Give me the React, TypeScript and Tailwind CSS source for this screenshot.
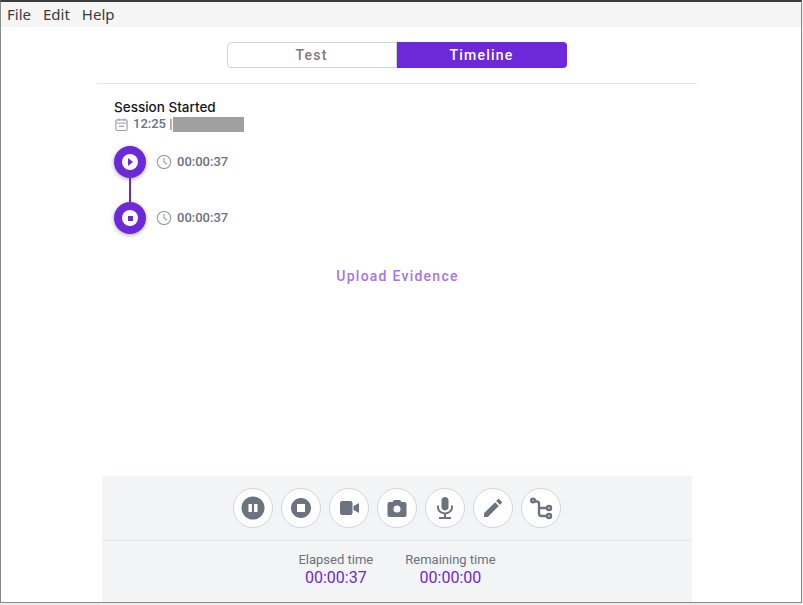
const toolIcons = [
  <svg key="pause" viewBox="0 0 24 24" className="h-6 w-6 fill-current">
    <path
      fillRule="evenodd"
      d="M12 .5a11.500 11.500 0 1 0 0 23 11.500 11.500 0 0 0 0-23zM7.500 8h3.400v8H7.500zm5.600 0h3.400v8h-3.400z"
    />
  </svg>,
  <svg key="stop" viewBox="0 0 24 24" className="h-6 w-6 fill-current">
    <path d="M12 2C6.48 2 2 6.48 2 12s4.48 10 10 10 10-4.48 10-10S17.52 2 12 2zm4 14H8V8h8v8z" />
  </svg>,
  <svg key="video" viewBox="0 0 24 24" className="h-6 w-6 fill-current">
    <path d="M5 5h8.500a2 2 0 0 1 2 2v10a2 2 0 0 1-2 2H5a2 2 0 0 1-2-2V7a2 2 0 0 1 2-2zm11.500 5L22 7v10l-5.500-3z" />
  </svg>,
  <svg key="camera" viewBox="0 0 24 24" className="h-6 w-6 fill-current">
    <path
      fillRule="evenodd"
      d="M9 4L7.500 6H4.500a2 2 0 0 0-2 2v11a2 2 0 0 0 2 2h15a2 2 0 0 0 2-2V8a2 2 0 0 0-2-2h-3L15 4H9zm3 5.500a3.500 3.500 0 1 1 0 7 3.500 3.500 0 0 1 0-7z"
    />
  </svg>,
  <svg key="mic" viewBox="0 0 24 24" className="h-6 w-6 fill-current">
    <path d="M12 14.500c2 0 3.500-1.500 3.500-3.500V4.500C15.500 2.500 14 1 12 1S8.500 2.500 8.500 4.500V11c0 2 1.500 3.500 3.500 3.500zM18 9.500V11c0 3.400-2.600 5.400-6 5.400S6 14.400 6 11V9.500H4V11c0 4 3 6.800 7 7.300V21H6v2h12v-2h-5v-2.700c4-.5 7-3.300 7-7.300V9.500h-2z" />
  </svg>,
  <svg key="pen" viewBox="0 0 24 24" className="h-6 w-6 fill-current">
    <path d="M3 17.250V21h3.750L17.810 9.940l-3.750-3.750L3 17.250zM20.710 7.040c.39-.39.39-1.020 0-1.410l-2.340-2.340c-.39-.39-1.020-.39-1.410 0l-1.830 1.830 3.750 3.750 1.830-1.830z" />
  </svg>,
  <svg key="path" viewBox="0 0 24 24" className="h-6 w-6 fill-none stroke-current" strokeWidth="2.400">
    <circle cx="4" cy="4.500" r="1.800" />
    <circle cx="20" cy="12" r="2" />
    <circle cx="20" cy="20" r="2" />
    <path d="M6 5.500h1.500A2.500 2.500 0 0 1 10 8v9.500a2.500 2.500 0 0 0 2.500 2.500H18M10 12h8" />
  </svg>,
]

function ClockIcon() {
  return (
    <svg viewBox="0 0 24 24" fill="none" stroke="currentColor" strokeWidth="1.800" className="ml-[10px] h-4 w-4 text-[#9ca3af]">
      <circle cx="12" cy="12" r="10" />
      <path d="M12 6v6l4 3" strokeLinecap="round" />
    </svg>
  )
}

function CalendarIcon() {
  return (
    <svg viewBox="0 0 24 24" fill="none" stroke="currentColor" strokeWidth="1.800" className="h-[15px] w-[15px] text-[#9ca3af]">
      <rect x="3" y="4.500" width="18" height="17" rx="2" />
      <path d="M3 9.500h18M8 2v4M16 2v4M8 15h8" />
    </svg>
  )
}

function TimelineRow({ stop }: { stop?: boolean }) {
  return (
    <div className="flex items-center">
      <div className="flex h-8 w-8 items-center justify-center rounded-full bg-[#6d28d9] shadow-[0_1px_4px_rgba(0,0,0,0.35)]">
        <div className="flex h-4 w-4 items-center justify-center rounded-full bg-white">
          {stop ? (
            <div className="h-[5px] w-[5px] bg-[#6d28d9]" />
          ) : (
            <div className="ml-px h-0 w-0 border-y-[4px] border-l-[5px] border-y-transparent border-l-[#6d28d9]" />
          )}
        </div>
      </div>
      <ClockIcon />
      <span className="ml-[5px] font-['Roboto',sans-serif] text-[13px] font-medium text-[#6b7280]">00:00:37</span>
    </div>
  )
}

export default function App() {
  return (
    <div className="h-[605px] w-[803px] overflow-hidden bg-[#ececec] pr-px pb-[2px] font-['Inter',sans-serif]">
      <div className="flex h-full flex-col border-x border-b border-t-2 border-x-[#8a8a8a] border-t-[#3a3a3a] border-b-[#8a8a8a] bg-white">
        {/* Menu */}
        <div className="flex h-[25px] items-center gap-3 bg-[#f5f5f5] px-[6px] font-['Noto_Sans',sans-serif] text-[15px] text-[#3c3c3c]">
          <span>File</span>
          <span>Edit</span>
          <span>Help</span>
        </div>

        {/* Tabs */}
        <div className="mt-[15px] flex justify-center pr-[9px]">
          <div className="flex h-[26px] w-[340px] font-['Roboto',sans-serif] text-sm font-medium tracking-[1.25px]">
            <div className="flex w-[170px] items-center justify-center rounded-l border border-[#d1d5db] text-[#7b7b7b]">Test</div>
            <div className="flex w-[170px] items-center justify-center rounded-r bg-[#6d28d9] text-white">Timeline</div>
          </div>
        </div>

        <div className="mt-[15px] ml-[96px] w-[600px] border-t border-[#e5e5e5]" />

        {/* Session */}
        <div className="ml-[113px] pt-[15px]">
          <div className="text-[13.5px] leading-[17px] font-medium text-[#111827]">Session Started</div>
          <div className="flex h-[16px] items-center font-['Roboto',sans-serif] text-[13px] font-medium text-[#6b7280]">
            <CalendarIcon />
            <span className="ml-1">12:25 |</span>
            <span className="ml-px h-[15px] w-[71px] bg-[#a0a0a0]" />
          </div>
          <div className="mt-[14px] flex flex-col">
            <TimelineRow />
            <div className="ml-[15px] h-[24px] w-[2px] bg-[#6d28d9]" />
            <TimelineRow stop />
          </div>
        </div>

        <div className="mt-[32px] pr-[7px] text-center font-['Roboto',sans-serif] text-sm font-medium tracking-[1.25px] text-[#a974e6]">
          Upload Evidence
        </div>

        {/* Bottom panel */}
        <div className="mt-auto ml-[101px] w-[590px] bg-[#f3f4f6]">
          <div className="flex h-[65px] items-center justify-center gap-2 border-b border-[#e5e7eb]">
            {toolIcons.map((icon) => (
              <div
                key={icon.key}
                className="flex h-10 w-10 items-center justify-center rounded-full border border-[#d1d5db] bg-white text-[#6b7280]"
              >
                {icon}
              </div>
            ))}
          </div>
          <div className="flex h-[61px] justify-center gap-8 pt-[11px] font-['Roboto',sans-serif]">
            <div className="text-center">
              <div className="text-[13px] leading-[16px] text-[#6b7280]">Elapsed time</div>
              <div className="text-base leading-[19px] text-[#6d28d9]">00:00:37</div>
            </div>
            <div className="text-center">
              <div className="text-[13px] leading-[16px] text-[#6b7280]">Remaining time</div>
              <div className="text-base leading-[19px] text-[#6d28d9]">00:00:00</div>
            </div>
          </div>
        </div>
      </div>
    </div>
  )
}
